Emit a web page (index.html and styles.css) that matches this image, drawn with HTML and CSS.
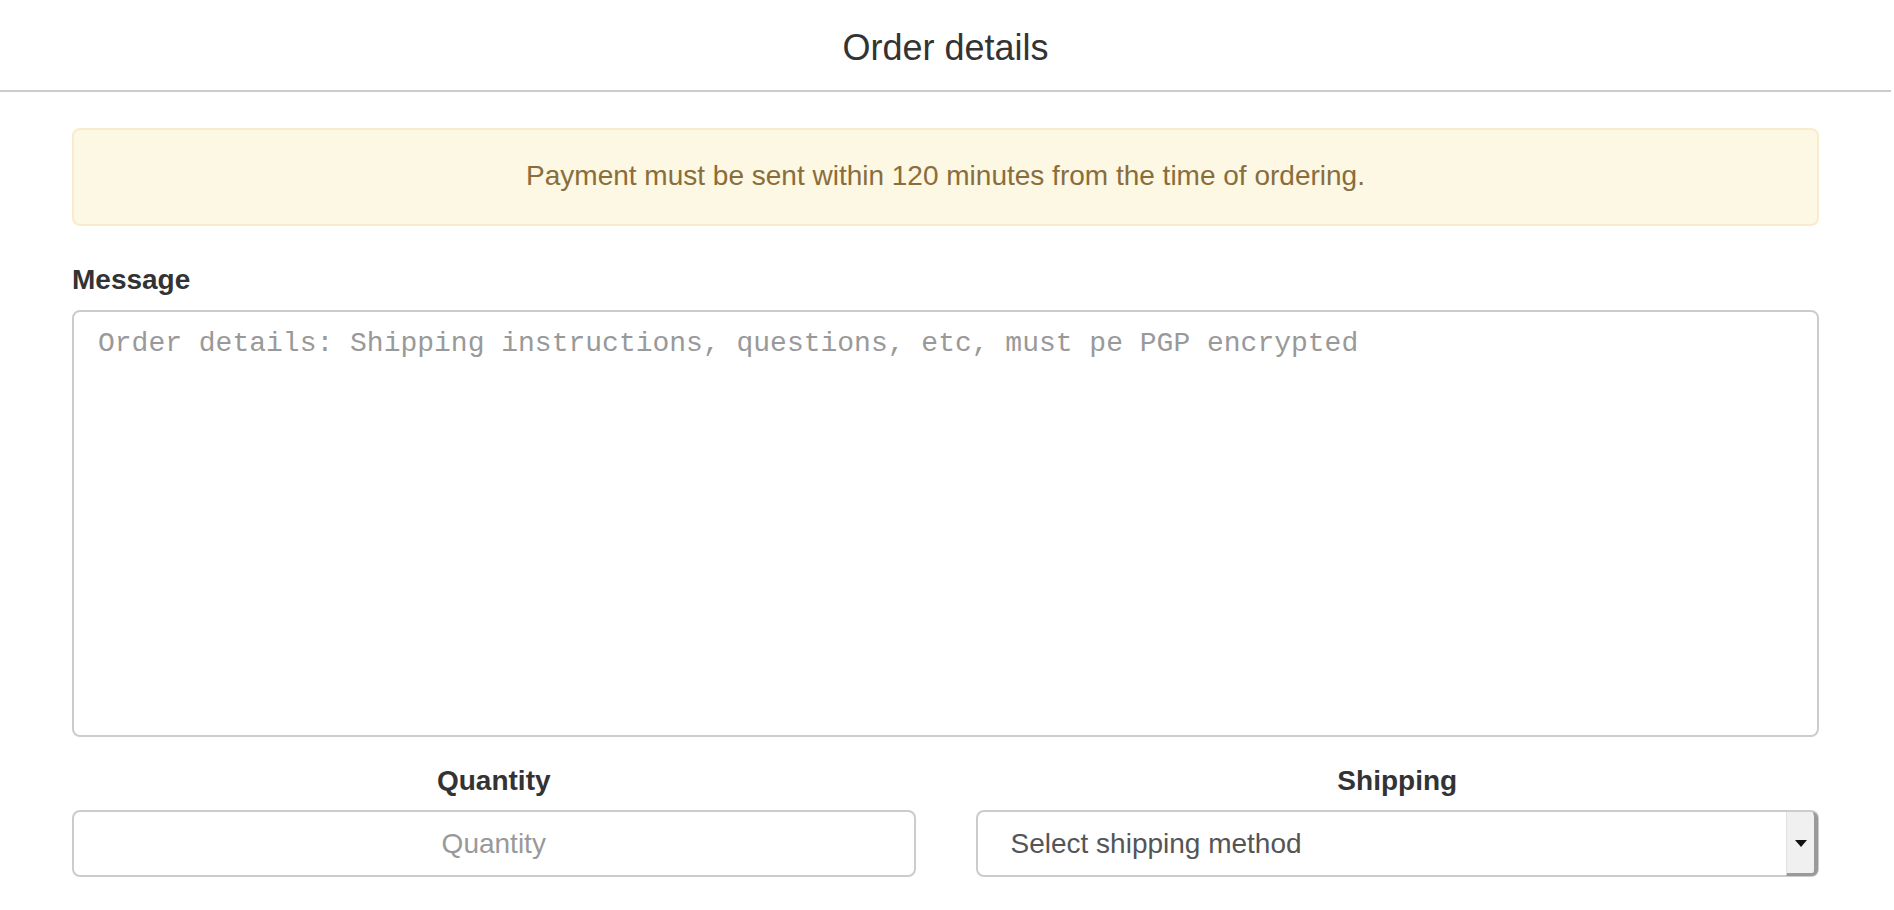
FILE: index.html
```html
<!DOCTYPE html>
<html lang="en">
<head>
    <meta charset="UTF-8">
    <meta name="viewport" content="width=device-width, initial-scale=1.0">
    <title>Order details</title>
    <link rel="stylesheet" href="styles.css">
</head>
<body>
    <div class="order-modal">
        <div class="modal-header">
            <h4 class="modal-title">Order details</h4>
        </div>

        <div class="modal-body">
            <div class="alert alert-warning">
                Payment must be sent within 120 minutes from the time of ordering.
            </div>

            <div class="form-group">
                <label for="message">Message</label>
                <textarea id="message" class="form-control message-box" placeholder="Order details: Shipping instructions, questions, etc, must pe PGP encrypted"></textarea>
            </div>

            <div class="form-row">
                <div class="form-col">
                    <label for="quantity">Quantity</label>
                    <input id="quantity" type="text" class="form-control quantity-input" placeholder="Quantity">
                </div>
                <div class="form-col">
                    <label for="shipping">Shipping</label>
                    <div class="select-wrap">
                        <select id="shipping" class="form-control shipping-select">
                            <option>Select shipping method</option>
                        </select>
                        <span class="select-arrow"></span>
                    </div>
                </div>
            </div>
        </div>
    </div>
</body>
</html>
```

FILE: styles.css
```css
body {
    margin: 0 3px 0 0;
    padding: 0;
    background: #ffffff;
    font-family: "Liberation Sans", Arial, Helvetica, sans-serif;
    color: #333333;
}

.modal-header {
    padding: 25px 0 20px;
    border-bottom: 2px solid #cccccc;
    text-align: center;
}

.modal-title {
    margin: 0;
    font-size: 36px;
    font-weight: normal;
    line-height: 45px;
    color: #333333;
}

.modal-body {
    padding: 36px 72px 0;
}

.alert {
    padding: 26px 30px 28px;
    border: 2px solid transparent;
    border-radius: 8px;
    font-size: 28px;
    line-height: 40px;
    text-align: center;
}

.alert-warning {
    background-color: #fcf8e3;
    border-color: #faebcc;
    color: #8a6d3b;
}

label {
    display: block;
    font-size: 28px;
    font-weight: bold;
    line-height: 40px;
    color: #333333;
}

.form-group {
    margin-top: 34px;
}

.form-group label {
    margin-bottom: 10px;
}

.form-control {
    display: block;
    width: 100%;
    box-sizing: border-box;
    border: 2px solid #cccccc;
    border-radius: 8px;
    background: #ffffff;
    font-size: 28px;
    color: #555555;
    outline: none;
}

.form-control::placeholder {
    color: #999999;
}

.message-box {
    height: 427px;
    padding: 12px 24px;
    resize: none;
    font-family: "Liberation Mono", "Courier New", monospace;
    line-height: 40px;
}

.form-row {
    display: flex;
    gap: 60px;
    margin-top: 24px;
}

.form-col {
    flex: 1;
    text-align: center;
}

.form-col label {
    margin-bottom: 9px;
}

.quantity-input {
    height: 67px;
    padding: 0 24px;
    font-family: "Liberation Sans", Arial, Helvetica, sans-serif;
    text-align: center;
}

.select-wrap {
    position: relative;
}

.shipping-select {
    height: 67px;
    padding: 0 40px 0 33px;
    font-family: "Liberation Sans", Arial, Helvetica, sans-serif;
    text-align: left;
    appearance: none;
    -webkit-appearance: none;
}

.select-arrow {
    position: absolute;
    top: 2px;
    right: 1px;
    bottom: 1px;
    width: 27px;
    background: #f0f0f0;
    border-left: 1px solid #e2e2e2;
    border-right: 4px solid #9a9a9a;
    border-bottom: 3px solid #9a9a9a;
    border-radius: 0 6px 6px 0;
    pointer-events: none;
}

.select-arrow::after {
    content: "";
    position: absolute;
    top: 28px;
    left: 8px;
    border-left: 6px solid transparent;
    border-right: 6px solid transparent;
    border-top: 7px solid #111111;
}
```
